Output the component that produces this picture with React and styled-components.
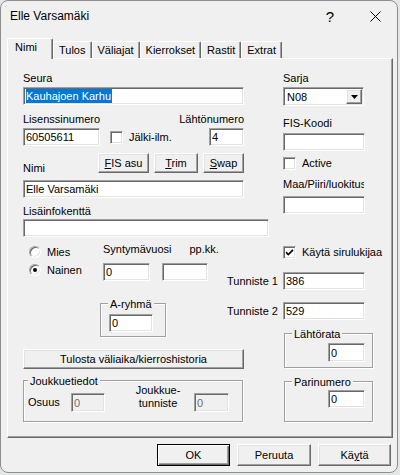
import React from "react";
import styled, { createGlobalStyle, css } from "styled-components";

const GlobalStyle = createGlobalStyle`
  html, body { margin: 0; padding: 0; }
  body {
    background: #e4e8e4;
    font-family: "Liberation Sans", Arial, sans-serif;
    font-size: 11px;
    color: #000;
  }
`;

const sunken = css`
  border: 1px solid;
  border-color: #a0a0a0 #ffffff #ffffff #a0a0a0;
  box-shadow: inset 1px 1px 0 #696969, inset -1px -1px 0 #e3e3e3;
`;

const raised = css`
  border: 1px solid;
  border-color: #ffffff #696969 #696969 #ffffff;
  box-shadow: inset -1px -1px 0 #a0a0a0, inset 1px 1px 0 #e3e3e3;
`;

const Window = styled.div`
  width: 398px;
  height: 473px;
  box-sizing: border-box;
  border: 1px solid #8e8e8e;
  border-radius: 8px;
  background: #f0f0f0;
  overflow: hidden;
`;

const TitleBar = styled.div`
  height: 30px;
  display: flex;
  align-items: center;
`;

const TitleText = styled.div`
  flex: 1;
  padding-left: 9px;
  font-size: 12px;
`;

const CaptionButton = styled.div`
  width: ${(p) => p.$w}px;
  height: 30px;
  display: flex;
  align-items: center;
  justify-content: center;
  font-size: 15px;
`;

const TabStrip = styled.div`
  display: flex;
  align-items: flex-end;
  height: 20px;
  margin: 7px 0 0 6px;
`;

const Tab = styled.div`
  position: relative;
  box-sizing: border-box;
  height: ${(p) => (p.$active ? 21 : 17)}px;
  min-width: ${(p) => (p.$active ? 46 : 0)}px;
  margin-bottom: ${(p) => (p.$active ? -1 : 0)}px;
  padding: 1px 5px 0 ${(p) => (p.$active ? 7 : 5)}px;
  z-index: ${(p) => (p.$active ? 1 : 0)};
  line-height: 14px;
  white-space: nowrap;
  background: #f0f0f0;
  border-top: 1px solid #fff;
  border-left: 1px solid #fff;
  border-right: 1px solid #696969;
  box-shadow: inset -1px 0 0 #a0a0a0;
  border-radius: 2px 2px 0 0;
`;

const Panel = styled.div`
  box-sizing: border-box;
  width: 386px;
  height: 380px;
  margin-left: 6px;
  padding: 12px 0 0 15px;
  border-top: 1px solid #fff;
  border-left: 1px solid #fff;
  border-right: 1px solid #696969;
  border-bottom: 1px solid #696969;
  box-shadow: inset -1px -1px 0 #a0a0a0;
`;

const Columns = styled.div`
  display: flex;
  gap: 14px;
`;

const LeftColumn = styled.div`
  width: 246px;
  display: flex;
  flex-direction: column;
  align-items: flex-start;
`;

const RightColumn = styled.div`
  width: 90px;
  display: flex;
  flex-direction: column;
  align-items: flex-start;
`;

const Label = styled.div`
  line-height: 14px;
  white-space: nowrap;
  margin-top: ${(p) => p.$mt || 0}px;
  margin-left: ${(p) => p.$ml || 0}px;
  margin-bottom: ${(p) => p.$mb || 0}px;
  ${(p) => p.$clip && css`
    width: ${p.$clip}px;
    overflow: hidden;
  `}
`;

const Field = styled.div`
  ${sunken};
  box-sizing: border-box;
  flex-shrink: 0;
  width: ${(p) => p.$w}px;
  height: ${(p) => p.$h || 18}px;
  margin-top: ${(p) => p.$mt || 0}px;
  margin-left: ${(p) => p.$ml || 0}px;
  padding: 0 2px;
  display: flex;
  align-items: center;
  line-height: 14px;
  white-space: nowrap;
  overflow: hidden;
  background: ${(p) => (p.$disabled ? "#f0f0f0" : "#fff")};
  color: ${(p) => (p.$disabled ? "#6d6d6d" : "#000")};
`;

const Selected = styled.span`
  background: #0078d7;
  color: #fff;
  padding: 0 1px 0 0;
`;

const Select = styled(Field)`
  padding: 0 1px 0 3px;
  justify-content: space-between;
`;

const DropButton = styled.div`
  ${raised};
  box-sizing: border-box;
  width: 16px;
  height: 15px;
  background: #f0f0f0;
  display: flex;
  align-items: center;
  justify-content: center;
`;

const Button = styled.button`
  ${raised};
  box-sizing: border-box;
  flex-shrink: 0;
  width: ${(p) => p.$w}px;
  height: ${(p) => p.$h || 20}px;
  margin-top: ${(p) => p.$mt || 0}px;
  padding: 0;
  background: #f0f0f0;
  font: inherit;
  color: #000;
  line-height: 14px;
  ${(p) => p.$default && css`
    border: 1px solid #000;
    box-shadow: inset 1px 1px 0 #fff, inset -1px -1px 0 #696969,
      inset -2px -2px 0 #a0a0a0;
  `}
`;

const FormRow = styled.div`
  display: flex;
  align-items: ${(p) => p.$align || "center"};
  justify-content: ${(p) => p.$justify || "flex-start"};
  gap: ${(p) => p.$gap || 0}px;
  width: ${(p) => (p.$w ? `${p.$w}px` : "auto")};
  margin-top: ${(p) => p.$mt || 0}px;
  margin-left: ${(p) => p.$ml || 0}px;
`;

const FieldStack = styled.div`
  display: flex;
  flex-direction: column;
  align-items: ${(p) => p.$align || "flex-start"};
`;

const ButtonGroup = styled.div`
  display: flex;
  gap: 5px;
  margin-left: auto;
`;

const Check = styled.div`
  display: flex;
  align-items: center;
  gap: 6px;
  height: 14px;
  white-space: nowrap;
  margin-top: ${(p) => p.$mt || 0}px;
  margin-left: ${(p) => p.$ml || 0}px;
`;

const CheckBox = styled.div`
  ${sunken};
  box-sizing: border-box;
  width: 13px;
  height: 13px;
  background: #fff;
  display: flex;
  align-items: center;
  justify-content: center;
`;

const BirthRow = styled.div`
  display: flex;
  margin-top: 5px;
`;

const RadioGroup = styled.div`
  box-sizing: border-box;
  width: 80px;
  padding: 1px 0 0 6px;
  display: flex;
  flex-direction: column;
`;

const RadioItem = styled.div`
  height: 18px;
  display: flex;
  align-items: center;
  gap: 6px;
`;

const RadioDot = styled.div`
  box-sizing: border-box;
  width: 12px;
  height: 12px;
  border-radius: 50%;
  border: 1px solid;
  border-color: #a0a0a0 #ffffff #ffffff #a0a0a0;
  box-shadow: inset 1px 1px 0 #696969, inset -1px -1px 0 #e3e3e3;
  background: #fff;
  display: flex;
  align-items: center;
  justify-content: center;
  &::after {
    content: "";
    display: ${(p) => (p.$checked ? "block" : "none")};
    width: 4px;
    height: 4px;
    border-radius: 50%;
    background: #000;
  }
`;

const GroupBox = styled.div`
  position: relative;
  box-sizing: border-box;
  width: ${(p) => p.$w}px;
  height: ${(p) => p.$h}px;
  margin-top: ${(p) => p.$mt || 0}px;
  margin-left: ${(p) => p.$ml || 0}px;
  padding: ${(p) => p.$pad};
  border: 1px solid #a0a0a0;
  box-shadow: inset 1px 1px 0 #fff, 1px 1px 0 #fff;
  display: flex;
  align-items: flex-start;
  justify-content: ${(p) => p.$justify || "flex-start"};
`;

const GroupCaption = styled.div`
  position: absolute;
  top: -7px;
  left: ${(p) => p.$x || 7}px;
  padding: 0 2px;
  background: #f0f0f0;
  line-height: 14px;
  white-space: nowrap;
`;

const TeamLabel = styled.div`
  width: 46px;
  margin: -9px 0 0 30px;
  text-align: center;
  line-height: 13px;
`;

const SideRow = styled.div`
  display: flex;
  align-items: center;
  margin-top: ${(p) => p.$mt || 0}px;
`;

const SideLabel = styled.div`
  box-sizing: border-box;
  width: 56px;
  margin-left: -56px;
  padding-right: 7px;
  text-align: right;
  white-space: nowrap;
  line-height: 14px;
`;

const Footer = styled.div`
  display: flex;
  justify-content: flex-end;
  gap: 7px;
  margin-top: 6px;
  padding-right: 6px;
`;

const Tick = () => (
  <svg width="9" height="9" viewBox="0 0 9 9">
    <path d="M1 4.2 L3.3 6.5 L8 1.8" fill="none" stroke="#000" strokeWidth="1.7" />
  </svg>
);

const Arrow = () => (
  <svg width="7" height="4" viewBox="0 0 7 4">
    <path d="M0 0 H7 L3.5 4 Z" fill="#000" />
  </svg>
);

const CloseIcon = () => (
  <svg width="11" height="11" viewBox="0 0 11 11">
    <path d="M0.5 0.5 L10.5 10.5 M10.5 0.5 L0.5 10.5" stroke="#000" strokeWidth="1" />
  </svg>
);

const tabs = ["Nimi", "Tulos", "Väliajat", "Kierrokset", "Rastit", "Extrat"];

export default function App() {
  return (
    <>
      <GlobalStyle />
      <Window>
        <TitleBar>
          <TitleText>Elle Varsamäki</TitleText>
          <CaptionButton $w={46}>?</CaptionButton>
          <CaptionButton $w={44}>
            <CloseIcon />
          </CaptionButton>
        </TitleBar>

        <TabStrip>
          {tabs.map((t, i) => (
            <Tab key={t} $active={i === 0}>
              {t}
            </Tab>
          ))}
        </TabStrip>

        <Panel>
          <Columns>
            <LeftColumn>
              <Label>Seura</Label>
              <Field $w={221} $mt={2}>
                <Selected>Kauhajoen Karhu</Selected>
              </Field>

              <FormRow $w={221} $justify="space-between" $align="flex-start" $mt={7}>
                <FieldStack>
                  <Label>Lisenssinumero</Label>
                  <FormRow $mt={2}>
                    <Field $w={77}>60505611</Field>
                    <Check $ml={10}>
                      <CheckBox />
                      Jälki-ilm.
                    </Check>
                  </FormRow>
                </FieldStack>
                <FieldStack $align="flex-end">
                  <Label>Lähtönumero</Label>
                  <Field $w={35} $mt={2}>4</Field>
                </FieldStack>
              </FormRow>

              <FormRow $w={221} $align="flex-end" $mt={7}>
                <Label $mb={-2}>Nimi</Label>
                <ButtonGroup>
                  <Button $w={51}><u>F</u>IS asu</Button>
                  <Button $w={44}><u>T</u>rim</Button>
                  <Button $w={41}><u>S</u>wap</Button>
                </ButtonGroup>
              </FormRow>
              <Field $w={221} $mt={7}>Elle Varsamäki</Field>

              <Label $mt={6}>Lisäinfokenttä</Label>
              <Field $w={246} $mt={1} />

              <BirthRow>
                <RadioGroup>
                  <RadioItem>
                    <RadioDot />
                    Mies
                  </RadioItem>
                  <RadioItem>
                    <RadioDot $checked />
                    Nainen
                  </RadioItem>
                </RadioGroup>
                <FieldStack>
                  <FormRow>
                    <Label>Syntymävuosi</Label>
                    <Label $ml={18}>pp.kk.</Label>
                  </FormRow>
                  <FormRow $mt={7}>
                    <Field $w={47}>0</Field>
                    <Field $w={46} $ml={12} />
                  </FormRow>
                </FieldStack>
              </BirthRow>

              <GroupBox $w={66} $h={34} $mt={22} $ml={77} $pad="10px 0 0 8px">
                <GroupCaption>A-ryhmä</GroupCaption>
                <Field $w={44}>0</Field>
              </GroupBox>

              <Button $w={221} $mt={12}>Tulosta väliaika/kierroshistoria</Button>

              <GroupBox $w={220} $h={42} $mt={11} $pad="12px 0 0 4px">
                <GroupCaption $x={4}>Joukkuetiedot</GroupCaption>
                <Label $mt={2} style={{ width: 43 }}>Osuus</Label>
                <Field $w={34} $h={19} $disabled>0</Field>
                <TeamLabel>
                  Joukkue-
                  <br />
                  tunniste
                </TeamLabel>
                <Field $w={35} $h={19} $ml={13} $disabled>0</Field>
              </GroupBox>
            </LeftColumn>

            <RightColumn>
              <Label>Sarja</Label>
              <Select $w={81} $h={19} $mt={2}>
                N08
                <DropButton>
                  <Arrow />
                </DropButton>
              </Select>

              <Label $mt={10}>FIS-Koodi</Label>
              <Field $w={82} $mt={3} />

              <Check $mt={5}>
                <CheckBox />
                Active
              </Check>

              <Label $mt={7} $clip={81}>Maa/Piiri/luokitus</Label>
              <Field $w={82} $mt={5} />

              <Check $mt={31}>
                <CheckBox>
                  <Tick />
                </CheckBox>
                Käytä sirulukijaa
              </Check>

              <SideRow $mt={13}>
                <SideLabel>Tunniste 1</SideLabel>
                <Field $w={82}>386</Field>
              </SideRow>
              <SideRow $mt={12}>
                <SideLabel>Tunniste 2</SideLabel>
                <Field $w={82}>529</Field>
              </SideRow>

              <GroupBox $w={89} $h={35} $mt={13} $ml={1} $pad="9px 7px 0 0" $justify="flex-end">
                <GroupCaption>Lähtörata</GroupCaption>
                <Field $w={37} $h={19}>0</Field>
              </GroupBox>

              <GroupBox $w={89} $h={41} $mt={13} $ml={1} $pad="8px 7px 0 0" $justify="flex-end">
                <GroupCaption>Parinumero</GroupCaption>
                <Field $w={37}>0</Field>
              </GroupBox>
            </RightColumn>
          </Columns>
        </Panel>

        <Footer>
          <Button $w={73} $h={22} $default>OK</Button>
          <Button $w={74} $h={22}>Peruuta</Button>
          <Button $w={73} $h={22}>
            Kä<u>y</u>tä
          </Button>
        </Footer>
      </Window>
    </>
  );
}
